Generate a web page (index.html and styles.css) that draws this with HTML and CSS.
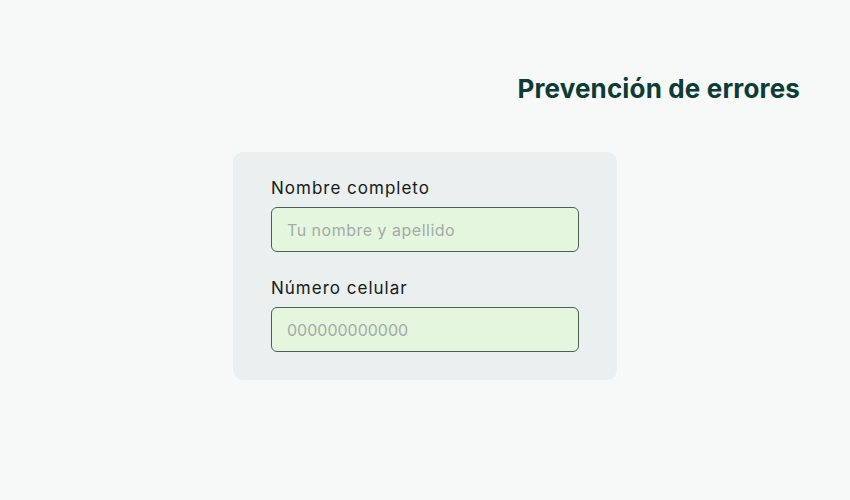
FILE: index.html
```html
<!DOCTYPE html>
<html lang="es">
<head>
<meta charset="utf-8">
<link rel="stylesheet" href="styles.css">
</head>
<body>
<div class="page">
  <h1 class="title">Prevención de errores</h1>
  <div class="card">
    <div class="field">
      <label class="label">Nombre completo</label>
      <div class="input input-text">Tu nombre y apellido</div>
    </div>
    <div class="field">
      <label class="label">Número celular</label>
      <div class="input">000000000000</div>
    </div>
  </div>
</div>
</body>
</html>
```
FILE: styles.css
```css
html, body {
  margin: 0;
  padding: 0;
}
body {
  width: 850px;
  height: 500px;
  background: #f7f9f9;
  font-family: "Inter", "Noto Sans", sans-serif;
  overflow: hidden;
}
.page {
  display: flex;
  flex-direction: column;
  align-items: flex-start;
}
.title {
  align-self: flex-end;
  margin: 72px 50px 0 0;
  font-size: 26px;
  line-height: 34px;
  font-weight: 700;
  color: #0e3b36;
  letter-spacing: 0.15px;
}
.card {
  margin: 46px 0 0 233px;
  width: 384px;
  box-sizing: border-box;
  padding: 24px 38px 28px;
  background: #eaeff0;
  border-radius: 10px;
  display: flex;
  flex-direction: column;
  gap: 24px;
}
.field {
  display: flex;
  flex-direction: column;
  gap: 7px;
}
.label {
  font-size: 17px;
  line-height: 24px;
  color: #161a19;
  letter-spacing: 1px;
}
.input {
  height: 45px;
  box-sizing: border-box;
  border: 1px solid #4d5f58;
  border-radius: 6px;
  background: #e5f6df;
  padding: 0 15px;
  display: flex;
  align-items: center;
  font-size: 16px;
  color: #a2aba6;
}
.input-text {
  letter-spacing: 0.5px;
}
```
